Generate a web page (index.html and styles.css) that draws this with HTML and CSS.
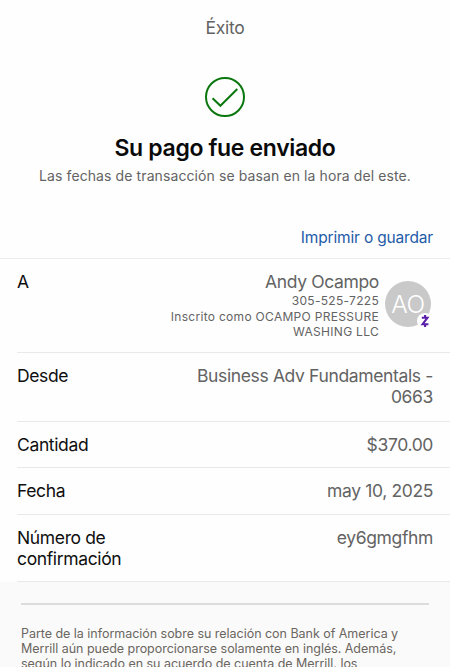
FILE: index.html
```
<!DOCTYPE html>
<html lang="es">
<head>
    <meta charset="UTF-8">
    <title>Éxito</title>
    <link rel="stylesheet" href="styles.css">
</head>
<body>
    <header class="topbar">Éxito</header>

    <section class="success">
        <svg class="check" viewBox="0 0 40 40" fill="none" stroke="#0b780f" stroke-width="2">
            <circle cx="20" cy="20" r="19"/>
            <path d="M7.6 21.2L15.4 28.8L32.3 12"/>
        </svg>
        <h1>Su pago fue enviado</h1>
        <p>Las fechas de transacción se basan en la hora del este.</p>
    </section>

    <div class="actions">
        <a class="print">Imprimir o guardar</a>
    </div>

    <dl class="details">
        <div class="row recipient">
            <dt>A</dt>
            <dd>
                <div class="contact">
                    <div class="name">Andy Ocampo</div>
                    <div class="phone">305-525-7225</div>
                    <div class="registered">Inscrito como OCAMPO PRESSURE WASHING LLC</div>
                </div>
                <div class="avatar">
                    <span>AO</span>
                    <svg class="zelle" viewBox="0 0 16 16">
                        <circle cx="8" cy="8" r="8" fill="#fefefe"/>
                        <path d="M4.8 4.8H10.4L5.6 11.2H11.4M8.1 2V4.8M8.1 11.2V14" fill="none" stroke="#5a1fa8" stroke-width="2.1"/>
                    </svg>
                </div>
            </dd>
        </div>
        <div class="row account">
            <dt>Desde</dt>
            <dd>Business Adv Fundamentals - 0663</dd>
        </div>
        <div class="row amount">
            <dt>Cantidad</dt>
            <dd>$370.00</dd>
        </div>
        <div class="row date">
            <dt>Fecha</dt>
            <dd>may 10, 2025</dd>
        </div>
        <div class="row confirmation">
            <dt>Número de confirmación</dt>
            <dd>ey6gmgfhm</dd>
        </div>
    </dl>

    <footer class="disclosure">
        <p>Parte de la información sobre su relación con Bank of America y Merrill aún puede proporcionarse solamente en inglés. Además, según lo indicado en su acuerdo de cuenta de Merrill, los</p>
    </footer>
</body>
</html>
```

FILE: styles.css
```
* {
    box-sizing: border-box;
}

body {
    margin: 0;
    height: 667px;
    overflow: hidden;
    display: flex;
    flex-direction: column;
    background: #fefefe;
    font-family: Inter, 'Liberation Sans', sans-serif;
    font-size: 17.5px;
    line-height: 21px;
    color: #636363;
}

.topbar {
    flex-shrink: 0;
    padding-top: 17px;
    height: 77px;
    text-align: center;
    letter-spacing: -0.3px;
}

.success {
    flex-shrink: 0;
    text-align: center;
    height: 149px;
}

.check {
    display: block;
    width: 40px;
    height: 40px;
    margin: 0 auto 17px;
}

h1 {
    margin: 0;
    font-size: 23px;
    font-weight: 600;
    line-height: 28px;
    letter-spacing: -0.35px;
    color: #0a0a0a;
}

.success p {
    margin: 4px 0 0;
    font-size: 14px;
    line-height: 20px;
    letter-spacing: 0.1px;
}

.actions {
    flex-shrink: 0;
    height: 32px;
    padding: 0 17px;
    text-align: right;
}

.print {
    font-size: 15.5px;
    letter-spacing: -0.17px;
    color: #1f5ba8;
}

.details {
    flex-shrink: 0;
    margin: 0;
    border-top: 1px solid #ececec;
}

.row {
    display: flex;
    justify-content: space-between;
    margin-left: 17px;
    padding: 12px 17px 12px 0;
    border-bottom: 1px solid #e9e9e9;
    letter-spacing: -0.36px;
}

dt {
    width: 120px;
    color: #0f0f0f;
}

dd {
    margin: 0;
    max-width: 250px;
    text-align: right;
}

.recipient {
    height: 94px;
    padding-right: 19px;
}

.recipient dd {
    display: flex;
    max-width: none;
    gap: 6px;
}

.contact {
    width: 220px;
    font-size: 12px;
    line-height: 15px;
    letter-spacing: 0.3px;
}

.name {
    font-size: 17.5px;
    line-height: 21px;
    letter-spacing: -0.36px;
}

.phone {
    line-height: 17px;
}

.avatar {
    position: relative;
    width: 46px;
    height: 46px;
    margin-top: 10px;
    border-radius: 50%;
    background: #c9c9c9;
    color: #fff;
    font-size: 24.5px;
    font-weight: 300;
    line-height: 47px;
    text-align: center;
    letter-spacing: -0.5px;
}

.zelle {
    position: absolute;
    right: -2px;
    bottom: -2px;
    width: 16px;
    height: 16px;
}

.account {
    height: 69px;
}

.amount {
    height: 46px;
}

.date {
    height: 47px;
}

.confirmation {
    height: 67px;
}

.disclosure {
    flex: 1;
    min-height: 0;
    padding: 21px 21px 0;
    background: #fafafa;
    font-size: 12.5px;
    line-height: 15px;
    letter-spacing: -0.03px;
    color: #6b665f;
}

.disclosure p {
    margin: 0;
    padding-top: 21px;
    border-top: 2px solid #dcdcdc;
}
```
